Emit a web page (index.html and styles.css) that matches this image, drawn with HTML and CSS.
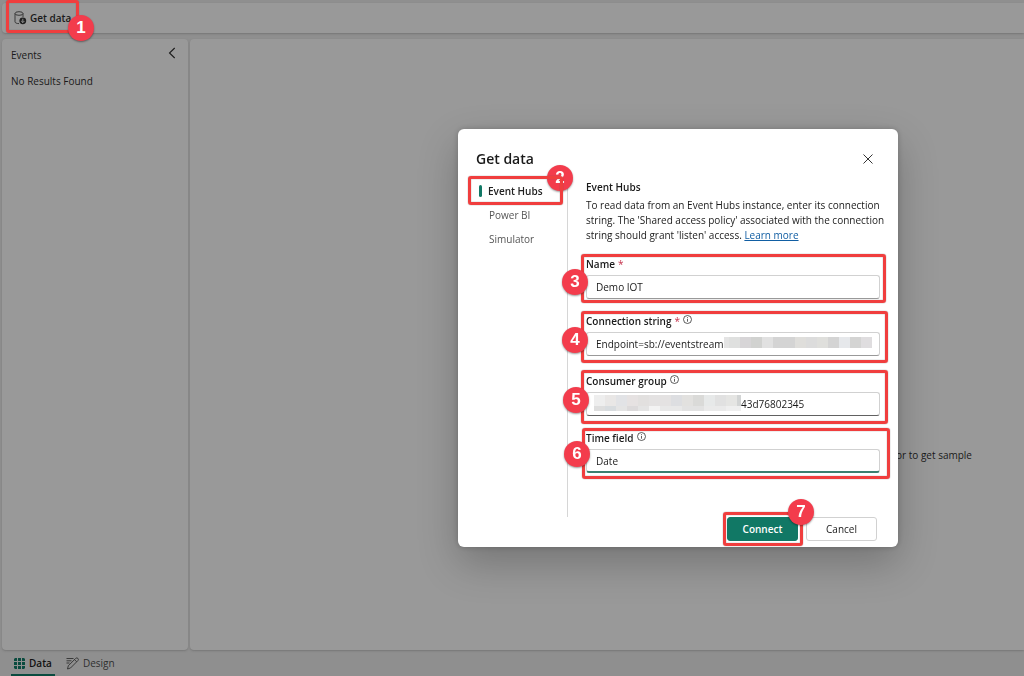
FILE: index.html
```html
<!DOCTYPE html>
<html lang="en">
<head>
<meta charset="utf-8">
<meta name="viewport" content="width=device-width, initial-scale=1">
<title>Get data</title>
<link rel="stylesheet" href="styles.css">
</head>
<body>
<div class="app">
  <header class="toolbar">
    <div class="marked marked-toolbar">
      <button class="tool-button" type="button">
        <svg width="13" height="14" viewBox="0 0 13 14" fill="none" stroke="#303030" stroke-width=".9"><ellipse cx="5" cy="2.5" rx="4" ry="1.8"/><path d="M1 2.5v8.3c0 1 1.6 1.8 4 1.8M9 2.5V6"/><circle cx="8.8" cy="9.8" r="3.4" fill="#202020" stroke="none"/><path d="M8.8 7.8v3.8M7.2 10l1.6 1.6L10.4 10" stroke="#999"/></svg>
        Get data
      </button>
      <span class="badge">1</span>
    </div>
  </header>
  <div class="workspace">
    <aside class="events">
      <div class="events-head">
        <h2 class="events-title">Events</h2>
        <button class="icon-button" type="button" aria-label="Collapse"><svg width="8" height="12" viewBox="0 0 8 12" fill="none" stroke="#1c1c1c" stroke-width="1.1"><path d="M6.7 1 1.5 6l5.2 5"/></svg></button>
      </div>
      <p class="events-empty">No Results Found</p>
    </aside>
    <main class="canvas"><p class="canvas-hint">or to get sample</p></main>
  </div>
  <footer class="tabs">
    <button class="tab tab-active" type="button">
      <svg width="11" height="11" viewBox="0 0 11 11" fill="#0b4b3f"><path d="M1 0h2v3H0V1zM4 0h3v3H4zM8 0h2l1 1v2H8zM0 4h3v3H0zM4 4h3v3H4zM8 4h3v3H8zM0 8h3v3H1l-1-1zM4 8h3v3H4zM8 8h3v2l-1 1H8z"/></svg>
      Data
    </button>
    <button class="tab" type="button">
      <svg width="13" height="13" viewBox="0 0 13 13" fill="none" stroke="#303030" stroke-width=".9"><path d="M.5 1.5h7M.5 3.8h5M.5 6h3M1.5 12l.8-3.2 7.4-7.4a1.5 1.5 0 0 1 2.2 2.2L4.5 11zM8.5 2.6l2.2 2.2"/></svg>
      Design
    </button>
  </footer>
</div>

<div class="dialog" role="dialog" aria-labelledby="dialog-title">
  <header class="dialog-head">
    <h1 class="dialog-title" id="dialog-title">Get data</h1>
    <button class="icon-button" type="button" aria-label="Close"><svg width="10" height="10" viewBox="0 0 10 10" fill="none" stroke="#333"><path d="m.5.5 9 9M9.5.5l-9 9"/></svg></button>
  </header>
  <div class="dialog-body">
    <nav class="sources">
      <div class="marked marked-source">
        <span class="badge">2</span>
        <a class="source source-active" href="#event-hubs">Event Hubs</a>
      </div>
      <a class="source" href="#power-bi">Power BI</a>
      <a class="source" href="#simulator">Simulator</a>
    </nav>
    <form class="form" id="source-form">
      <h2 class="form-title">Event Hubs</h2>
      <p class="form-text">To read data from an Event Hubs instance, enter its connection string. The 'Shared access policy' associated with the connection string should grant 'listen' access. <a class="link" href="#learn">Learn more</a></p>
      <div class="field marked marked-name">
        <label class="label" for="name">Name <span class="required">*</span></label>
        <input class="input" id="name" type="text" value="Demo IOT">
        <span class="badge">3</span>
      </div>
      <div class="field marked marked-connection">
        <label class="label" for="connection">Connection string <span class="required">*</span> <svg class="info" width="9" height="9" viewBox="0 0 9 9" fill="none" stroke="#333" stroke-width=".8"><circle cx="4.5" cy="4.5" r="4"/><path d="M4.5 4v2.7M4.5 2.2v1"/></svg></label>
        <input class="input" id="connection" type="text" value="Endpoint=sb://eventstream">
        <span class="mosaic mosaic-end"></span>
        <span class="badge">4</span>
      </div>
      <div class="field marked marked-group">
        <label class="label" for="group">Consumer group <svg class="info" width="9" height="9" viewBox="0 0 9 9" fill="none" stroke="#333" stroke-width=".8"><circle cx="4.5" cy="4.5" r="4"/><path d="M4.5 4v2.7M4.5 2.2v1"/></svg></label>
        <input class="input input-masked" id="group" type="text" value="43d76802345">
        <span class="mosaic mosaic-start"></span>
        <span class="badge">5</span>
      </div>
      <div class="field marked marked-time">
        <label class="label" for="time">Time field <svg class="info" width="9" height="9" viewBox="0 0 9 9" fill="none" stroke="#333" stroke-width=".8"><circle cx="4.5" cy="4.5" r="4"/><path d="M4.5 4v2.7M4.5 2.2v1"/></svg></label>
        <input class="input input-focused" id="time" type="text" value="Date">
        <span class="badge">6</span>
      </div>
    </form>
  </div>
  <footer class="dialog-actions">
    <div class="marked marked-connect">
      <button class="button button-primary" type="submit" form="source-form">Connect</button>
      <span class="badge">7</span>
    </div>
    <button class="button" type="button">Cancel</button>
  </footer>
</div>
</body>
</html>
```
FILE: styles.css
```css
* { box-sizing: border-box; }
body {
  margin: 0;
  background: #8f8f8f;
  color: #1a1a1a;
  font: 10px/15px "Open Sans", "Noto Sans", sans-serif;
}
h1, h2, p { margin: 0; }
button, input { font: inherit; color: inherit; }
button { cursor: pointer; }
svg { flex: none; }

/* Application behind the dialog */
.app { display: flex; flex-direction: column; min-height: 100vh; padding-left: 2px; }
.toolbar {
  display: flex;
  height: 30px;
  margin-top: 3px;
  padding-left: 12px;
  border-radius: 4px 0 0 4px;
  background: #999;
  box-shadow: 0 1px 2px #777;
}
.tool-button {
  display: flex;
  align-items: center;
  gap: 3px;
  height: 30px;
  padding: 0;
  border: 0;
  background: none;
  font-weight: 600;
}
.workspace { display: flex; flex: 1; gap: 2px; margin-top: 6px; }
.events, .canvas { background: #999; box-shadow: 0 1px 2px #777; }
.events { width: 186px; padding: 8px 12px 8px 9px; border-radius: 4px; }
.events-head { display: flex; justify-content: space-between; align-items: flex-start; }
.events-title { padding-top: 1px; font-size: 10px; font-weight: 400; }
.events-empty { margin-top: 11px; }
.canvas {
  display: flex;
  flex: 1;
  justify-content: flex-end;
  align-items: flex-end;
  padding: 0 52px 187px 0;
  border-radius: 4px 0 0 4px;
}
.icon-button { display: flex; padding: 0; border: 0; background: none; }
.tabs { display: flex; gap: 8px; height: 26px; padding-left: 9px; }
.tab {
  display: flex;
  align-items: center;
  gap: 4px;
  padding: 3px 3px 0;
  border: 0;
  border-bottom: 2px solid transparent;
  background: none;
  color: #303030;
}
.tab-active { border-color: #0b4b3f; color: #111; font-weight: 600; }

/* Dialog */
.dialog {
  position: fixed;
  top: 50%;
  left: 458px;
  display: flex;
  flex-direction: column;
  width: 440px;
  padding: 18px 21px 6px 10px;
  border-radius: 6px;
  background: #fff;
  box-shadow: 0 16px 40px rgba(0, 0, 0, .24), 0 0 6px rgba(0, 0, 0, .2);
  transform: translateY(-50%);
}
.dialog-head {
  display: flex;
  justify-content: space-between;
  align-items: center;
  height: 24px;
  padding: 0 4px 0 8px;
}
.dialog-title { font-size: 14px; line-height: 22px; font-weight: 600; }
.dialog-body { display: flex; min-height: 338px; margin-top: 8px; }
.sources { width: 100px; border-right: 1px solid #d6d6d6; }
.source {
  display: flex;
  align-items: center;
  gap: 6px;
  height: 24px;
  padding-left: 21px;
  color: #555;
  text-decoration: none;
}
.source-active { padding-left: 11px; color: #222; font-weight: 600; }
.source-active::before { content: ""; width: 3px; height: 12px; border-radius: 2px; background: #117865; }
.form { display: flex; flex: 1; flex-direction: column; padding: 1px 0 0 18px; margin-right: -3px; }
.form-title { font-size: 10px; font-weight: 600; }
.form-text { margin: 3px -12px 14px 0; }
.link { color: #115ea3; }
.label { display: flex; gap: 3px; height: 15px; font-weight: 600; }
.required { color: #c4314b; font-weight: 400; }
.info { margin-top: 1px; }
.input {
  display: block;
  width: 100%;
  height: 24px;
  margin-top: 3px;
  padding: 0 9px;
  border: 1px solid #d1d1d1;
  border-bottom-color: #999;
  border-radius: 3px;
  background: #fff;
  outline: 0;
}
.input-masked { padding-left: 154px; border-bottom-color: #616161; }
.input-focused { border-bottom: 2px solid #3b7f70; }
.mosaic { position: absolute; }
.mosaic-end {
  right: 8px;
  bottom: 8px;
  width: 148px;
  height: 11px;
  background: linear-gradient(90deg, #e4e4e4 0 5px, #dfe0df 5px 16px, #d7d5d7 16px 27px, #d1d2d0 27px 38px, #e1e1e1 38px 49px, #d4d4d4 49px 71px, #dfdedb 71px 82px, #dcdcdc 82px 93px, #dfdfdc 93px 104px, #d4d4d4 104px 115px, #e6e8eb 115px 126px, #d4d4d3 126px 137px, #dfdddf 137px);
}
.mosaic-start {
  left: 8px;
  bottom: 5px;
  width: 147px;
  height: 16px;
  background:
    linear-gradient(90deg, #dedede 0 11px, #d8dcdf 11px 22px, #e4e4e4 22px 33px, #dcdadb 33px 44px, #e4e4e4 44px 55px, #f3f3f3 55px 66px, #e8e8e8 66px 88px, #e2e2e2 88px 110px, #eaeaea 110px 132px, #efefef 132px) 0 100% / 100% 5px no-repeat,
    linear-gradient(90deg, #eee 0 11px, #e9e7e6 11px 22px, #e2e3e6 22px 33px, #e6e2e2 33px 44px, #e2e0df 44px 55px, #e4e2e2 55px 77px, #dddee1 77px 88px, #e2e1df 88px 99px, #dadad8 99px 110px, #e7e9e9 110px 121px, #e1e1e1 121px 132px, #e5e5e3 132px 143px, #d2d4d4 143px);
}
.dialog-actions { display: flex; justify-content: flex-end; gap: 8px; }
.button {
  display: block;
  width: 71px;
  height: 24px;
  padding: 0;
  border: 1px solid #d1d1d1;
  border-radius: 3px;
  background: #fff;
}
.button-primary { border-color: #117865; background: #117865; color: #fff; font-weight: 600; }

/* Numbered step markers drawn over the controls */
.marked { position: relative; }
.marked::after {
  content: "";
  position: absolute;
  inset: var(--frame);
  border: 3px solid #f03e3e;
  border-radius: 3px;
  box-shadow: 0 0 1px #555, inset 0 0 1px #555;
  pointer-events: none;
}
.badge {
  position: absolute;
  top: var(--badge-top);
  left: var(--badge-left);
  z-index: 1;
  width: 26px;
  height: 26px;
  border-radius: 50%;
  background: #f33c4c;
  box-shadow: 0 1px 2px rgba(0, 0, 0, .4);
  color: #fff;
  font: bold 17px/26px "Liberation Sans", Arial, sans-serif;
  text-align: center;
}
.marked-toolbar { --frame: -3px -8px 0 -8px; --badge-top: 12px; --badge-left: 54px; }
.marked-source { --frame: -3px 4px -2px 0; --badge-top: -14px; --badge-left: 79px; }
.marked-source .badge { z-index: 0; }
.marked-source .source { position: relative; }
.marked-name { --frame: -3px -6px -4px -5px; --badge-top: 12px; --badge-left: -24px; }
.marked-connection { --frame: -3px -8px -7px -5px; --badge-top: 13px; --badge-left: -24px; margin-top: 15px; }
.marked-group { --frame: -4px -8px -8px -5px; --badge-top: 13px; --badge-left: -23px; margin-top: 18px; }
.marked-time { --frame: -3px -10px -6px -4px; --badge-top: 10px; --badge-left: -22px; margin-top: 15px; }
.marked-connect { --frame: -5px -5px -5px -4px; --badge-top: -18px; --badge-left: 61px; }
```
